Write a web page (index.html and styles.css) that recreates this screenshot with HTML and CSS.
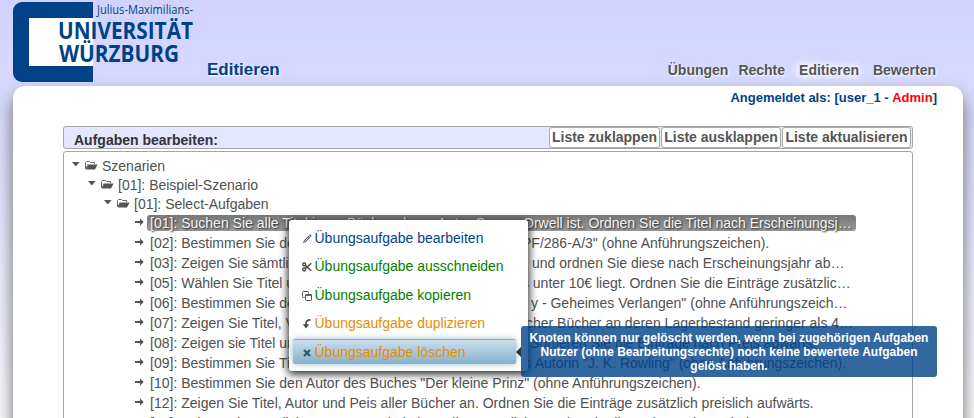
FILE: index.html
```html
<!DOCTYPE html>
<html lang="de">
<head>
<meta charset="utf-8">
<title>Editieren</title>
<link rel="stylesheet" href="styles.css">
</head>
<body>
<svg class="defs" aria-hidden="true">
  <symbol id="caret" viewBox="0 0 9 5"><path d="M0 0h7.600L3.800 4.500z"/></symbol>
  <symbol id="folder" viewBox="0 0 13 9"><path d="M.5 8V1.500L1.500.5h3l1 1h4v1.500M.5 8l2.500-4.500" fill="none" stroke="currentColor"/><path d="M3.500 3.500H12.600L10 8.500H.8z"/></symbol>
  <symbol id="arrow" viewBox="0 0 9 8"><path d="M0 3h5V.5L8.800 4 5 7.500V5H0z"/></symbol>
</svg>
<header class="head">
  <svg class="logo" width="182" height="82" viewBox="0 0 182 82">
    <path class="brand" d="M9 2H80V82H9a9 9 0 0 1-9-9V11a9 9 0 0 1 9-9z"/>
    <path fill="#fff" d="M16 18H80V66H16z"/>
    <text class="small" x="84" y="14" textLength="96" lengthAdjust="spacingAndGlyphs">Julius-Maximilians-</text>
    <text class="big" x="45" y="39.300" textLength="135" lengthAdjust="spacingAndGlyphs">UNIVERSITÄT</text>
    <text class="big" x="46" y="61.500" textLength="120" lengthAdjust="spacingAndGlyphs">WÜRZBURG</text>
  </svg>
  <h1>Editieren</h1>
  <nav><a>Übungen</a><a>Rechte</a><a class="on">Editieren</a><a>Bewerten</a></nav>
</header>
<main class="panel">
  <p class="login">Angemeldet als: [user_1 - <b>Admin</b>]</p>
  <div class="bar"><h2>Aufgaben bearbeiten:</h2><div class="btns"><a class="b1">Liste zuklappen</a><a class="b2">Liste ausklappen</a><a class="b3">Liste aktualisieren</a></div></div>
  <div class="tree">
    <div class="node n0"><svg class="caret"><use href="#caret"/></svg><svg class="folder"><use href="#folder"/></svg>Szenarien</div>
    <div class="node n1"><svg class="caret"><use href="#caret"/></svg><svg class="folder"><use href="#folder"/></svg>[01]: Beispiel-Szenario</div>
    <div class="node n2"><svg class="caret"><use href="#caret"/></svg><svg class="folder"><use href="#folder"/></svg>[01]: Select-Aufgaben</div>
    <div class="leaf sel"><svg><use href="#arrow"/></svg><p><span class="w1">[01]: Suchen Sie alle Titel jener Bücher, deren Autor George</span><span>Orwell ist. Ordnen Sie die Titel nach Erscheinungsj…</span></p></div>
    <div class="leaf"><svg><use href="#arrow"/></svg><p><span class="w2">[02]: Bestimmen Sie den Titel des Buches</span><span>"PF/286-A/3" (ohne Anführungszeichen).</span></p></div>
    <div class="leaf"><svg><use href="#arrow"/></svg><p><span class="w3">[03]: Zeigen Sie sämtliche Titel</span><span>und ordnen Sie diese nach Erscheinungsjahr ab…</span></p></div>
    <div class="leaf"><svg><use href="#arrow"/></svg><p><span class="w4">[05]: Wählen Sie Titel und Autor, deren</span><span>Preis unter 10€ liegt. Ordnen Sie die Einträge zusätzlic…</span></p></div>
    <div class="leaf"><svg><use href="#arrow"/></svg><p><span class="w5">[06]: Bestimmen Sie den Autor</span><span>y - Geheimes Verlangen" (ohne Anführungszeich…</span></p></div>
    <div class="leaf"><svg><use href="#arrow"/></svg><p><span class="w6">[07]: Zeigen Sie Titel, Verlag</span><span>solcher Bücher an deren Lagerbestand geringer als 4…</span></p></div>
    <div class="leaf"><svg><use href="#arrow"/></svg><p><span class="w7">[08]: Zeigen sie Titel und Preis</span><span>Sortieren Sie die Einträge nach Preis abwärts.</span></p></div>
    <div class="leaf"><svg><use href="#arrow"/></svg><p><span class="w8">[09]: Bestimmen Sie Titel</span><span>des Autorin "J. K. Rowling" (ohne Anführungszeichen).</span></p></div>
    <div class="leaf"><svg><use href="#arrow"/></svg><p>[10]: Bestimmen Sie den Autor des Buches "Der kleine Prinz" (ohne Anführungszeichen).</p></div>
    <div class="leaf"><svg><use href="#arrow"/></svg><p>[12]: Zeigen Sie Titel, Autor und Peis aller Bücher an. Ordnen Sie die Einträge zusätzlich preislich aufwärts.</p></div>
    <div class="leaf"><svg><use href="#arrow"/></svg><p>[13]: Zeigen Sie sämtliche Autoren und Titel an, die zusätzlich von der Abteilung der Verlage sind.</p></div>
  </div>
</main>
<ul class="menu">
  <li class="blue"><svg viewBox="0 0 10 10"><path d="M1 9l.8-2.600L6.500 1.700 8.300 3.500 3.600 8.200zM7 1.200L8 .3 9.700 2l-1 1z" fill="#555"/><path d="M2.500 7.500l4-4" stroke="#fff" stroke-width=".9"/></svg>Übungsaufgabe bearbeiten</li>
  <li class="green"><svg viewBox="0 0 10 10"><g fill="none" stroke="#4c4c4c" stroke-width="1.500"><circle cx="2.200" cy="2.500" r="1.400"/><circle cx="2.200" cy="7.500" r="1.400"/><path d="M3.300 3.400L9.300 8.800M3.300 6.600L9.300 1.200"/></g></svg>Übungsaufgabe ausschneiden</li>
  <li class="green"><svg viewBox="0 0 10 10"><g fill="none" stroke="#4c4c4c"><path d="M2.500 6.500H1.500a1 1 0 0 1-1-1v-4a1 1 0 0 1 1-1h4a1 1 0 0 1 1 1v1"/><rect x="3.500" y="3.500" width="6" height="6" rx="1"/><path d="M3.500 4h6" stroke-width="1.700"/></g></svg>Übungsaufgabe kopieren</li>
  <li class="orange"><svg viewBox="0 0 10 10"><path d="M8.500.8C5.500.8 4 2.500 4 5v1" fill="none" stroke="#4c4c4c" stroke-width="1.700"/><path d="M.8 5.300H7.200L4 9.400z" fill="#4c4c4c"/></svg>Übungsaufgabe duplizieren</li>
  <li class="orange hover"><svg viewBox="0 0 10 10"><path d="M2 2l6 6M8 2L2 8" stroke="#355a70" stroke-width="2.400"/></svg>Übungsaufgabe löschen</li>
</ul>
<div class="tip">Knoten können nur gelöscht werden, wenn bei zugehörigen Aufgaben Nutzer (ohne Bearbeitungsrechte) noch keine bewertete Aufgaben gelöst haben.</div>
</body>
</html>
```
FILE: styles.css
```css
* { box-sizing: border-box; }
html { height: 418px; overflow: hidden; }
body { margin: 0; height: 418px; overflow: hidden; position: relative; font: 14px/20px "Liberation Sans", Arial, sans-serif; color: #505050; background: linear-gradient(#d0d3ff, #dadcff 120px, #fdfdff 418px); }
h1, h2, p, ul { margin: 0; padding: 0; }
.defs { position: absolute; width: 0; height: 0; }
.head { height: 86px; padding: 0 38px 0 13px; display: flex; align-items: flex-start; }
.logo { flex: none; }
.brand, .logo text { fill: #004188; }
.small { font: 12.500px "Open Sans", sans-serif; }
.big { font: 700 23.200px "Open Sans", sans-serif; }
h1 { margin: 60px 0 0 12px; font-size: 17px; line-height: 20px; color: #004188; text-shadow: 1px 1px 2px #fff; }
nav { margin: 60px 0 0 auto; display: flex; font-weight: bold; color: #555; text-shadow: 1px 1px 2px #fff; }
nav a + a { margin-left: 10px; }
nav a.on { margin: 0 4px 0 14px; text-shadow: 0 0 5px #fff, 0 0 8px #fff, 0 0 10px #fff, 0 0 12px #fff; }
.panel { margin: 0 11px 0 13px; height: 500px; padding: 0 50px; background: #fff; border-radius: 12px; box-shadow: 0 10px 18px #6a6a6a; }
.login { height: 40px; margin-right: -24px; padding-top: 2px; text-align: right; font-size: 13px; font-weight: bold; color: #004188; }
.login b { color: red; }
.bar { height: 23px; border: 1px solid #a5a5a5; border-radius: 3px; background: #e5e6ff; display: flex; justify-content: space-between; }
h2 { padding: 4px 0 0 10px; font-size: 14px; line-height: 19px; color: #333; }
.btns { display: flex; gap: 1px; padding-right: 1px; }
.btns a { border: 1px solid #aaa; border-radius: 3px; background: #fff; font-weight: bold; line-height: 19px; height: 21px; color: #555; text-align: center; white-space: nowrap; }
.b1 { width: 111px; } .b2 { width: 120px; } .b3 { width: 129px; }
.tree { margin-top: 2px; height: 400px; border: 1px solid #a5a5a5; border-radius: 3px; padding-top: 5px; }
.node { display: flex; height: 19px; line-height: 19px; align-items: flex-start; }
.n0 { padding-left: 8px; } .n1 { padding-left: 24px; } .n2 { padding-left: 40px; }
.caret { width: 9px; height: 5px; margin: 5px 4px 0 0; fill: #555; }
.folder { width: 13px; height: 9px; margin: 4px 4px 0 0; fill: #555; color: #666; }
.leaf { display: flex; height: 20px; padding-left: 71px; align-items: flex-start; font-size: 14.030px; }
.leaf svg { width: 9px; height: 8px; margin: 4px 3px 0 0; fill: #555; }
.leaf p { display: flex; padding: 0 4px 0 3px; white-space: nowrap; height: 16px; line-height: 17px; margin-top: 1px; }
.leaf span[class] { overflow: hidden; height: 20px; flex: none; }
.sel p { background: linear-gradient(#777, #999); color: #f4f4f4; border-radius: 3px; text-shadow: 1px 1px 2px #222; }
.w1 { width: 373px; } .w2 { width: 367px; } .w3 { width: 382px; } .w4 { width: 347px; }
.w5 { width: 381px; } .w6 { width: 358px; } .w7 { width: 380px; } .w8 { width: 359px; }
.menu { position: absolute; left: 289px; top: 220px; width: 239px; height: 151px; padding: 5px 4px; list-style: none; background: #fff; border-radius: 3px; box-shadow: 0 2px 8px 1px #222; display: flex; flex-direction: column; gap: 3.500px; }
.menu li { height: 25px; width: 223px; padding-left: 9px; display: flex; align-items: center; border-radius: 2px; white-space: nowrap; }
.menu svg { width: 10px; height: 10px; margin: 2px 2.500px 0 0; flex: none; }
.blue { color: #004188; } .green { color: #008000; } .orange { color: #e88d00; }
.menu .hover { border-top: 1px solid #72adc8; background: linear-gradient(#cbdfeb, #84b1cb); box-shadow: 0 0 6px #9bc; }
.tip { position: absolute; left: 521px; top: 326px; width: 416px; height: 51px; padding: 5px 6px; background: rgba(0, 65, 136, .8); border-radius: 3px; color: #fff; font-weight: bold; font-size: 12px; line-height: 14px; text-align: center; }
.tip::before { content: ""; position: absolute; left: -5px; top: 21px; border: 5px solid transparent; border-right-color: #333; border-left: 0; }
```
